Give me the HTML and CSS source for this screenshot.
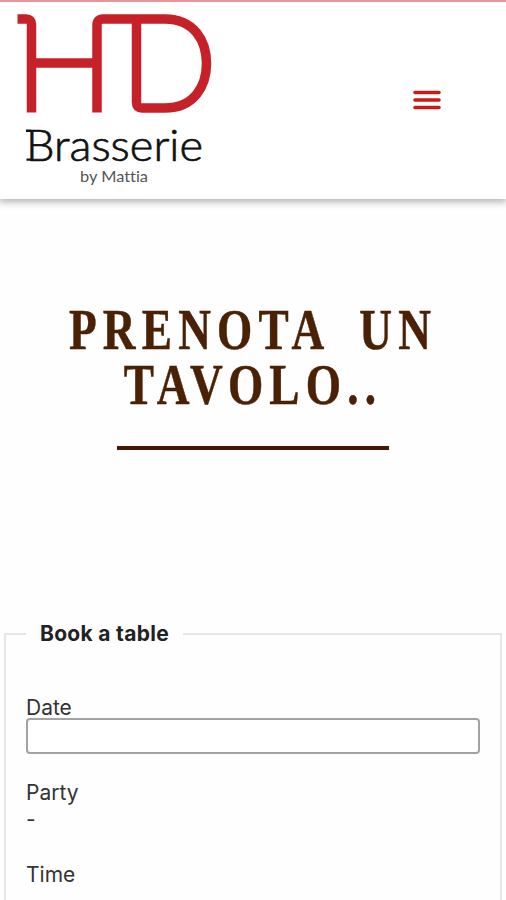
FILE: index.html
```
<!DOCTYPE html>
<html lang="it">
  <head>
    <meta charset="UTF-8" />
    <meta name="viewport" content="width=device-width, initial-scale=1.0" />
    <title>HD Brasserie - Prenota un tavolo</title>
    <link rel="stylesheet" href="styles.css">
  </head>

  <body>
    <header class="site-header">
      <a class="logo" href="#" aria-label="HD Brasserie by Mattia">
        <svg width="200" height="180" viewBox="0 0 200 180">
          <g class="logo-mark">
            <path d="M4.500 17H13Q18.500 17 18.500 22.500V110.500" />
            <path d="M18.500 61H84" />
            <path d="M84 110.500V23Q84 17 90 17H152C181 17 193.500 39 193.500 61.500S181 106 152 106H129Q123.500 106 123.500 100.500V17" />
          </g>
          <text class="logo-name" x="13" y="158.500" textLength="177" lengthAdjust="spacingAndGlyphs">Brasserie</text>
          <path class="logo-serif" d="M13 128.800H18M13.500 157.600H18" />
          <text class="logo-by" x="67" y="180" textLength="68" lengthAdjust="spacingAndGlyphs">by Mattia</text>
        </svg>
      </a>
      <button class="menu-toggle" aria-label="Menu">
        <svg width="28" height="20" viewBox="0 0 28 20">
          <path d="M2 2.500H26M2 10H26M2 17.500H26" />
        </svg>
      </button>
    </header>

    <main>
      <section class="intro">
        <h1>PRENOTA UN<br>TAVOLO..</h1>
        <hr>
      </section>

      <form class="booking">
        <fieldset>
          <legend>Book a table</legend>
          <div class="field">
            <label for="date">Date</label>
            <input id="date" type="text">
          </div>
          <div class="field">
            <span>Party</span>
            <span>-</span>
          </div>
          <div class="field">
            <span>Time</span>
          </div>
        </fieldset>
      </form>
    </main>
  </body>
</html>
```
FILE: styles.css
```
* {
  box-sizing: border-box;
}

body {
  margin: 0;
  height: 900px;
  overflow: hidden;
  background: #fefefe;
  color: #333;
  font-family: Inter, "Liberation Sans", sans-serif;
}

.site-header {
  display: flex;
  justify-content: space-between;
  height: 199px;
  padding: 0 65px 0 13px;
  border-top: 2px solid #e9959b;
  background: #fff;
  box-shadow: 0 2px 7px 1px rgba(0, 0, 0, 0.3);
}

.logo svg {
  display: block;
  overflow: visible;
}

.logo-mark {
  fill: none;
  stroke: #c62129;
  stroke-width: 9.5;
}

.logo-name {
  font: 300 43px Lato, sans-serif;
  fill: #111;
  stroke: #111;
  stroke-width: 0.7;
}

.logo-serif {
  stroke: #111;
  stroke-width: 2.4;
}

.logo-by {
  font: 400 16px Lato, sans-serif;
  font-variant-ligatures: none;
  fill: #555;
}

.menu-toggle {
  align-self: center;
  padding: 0 0 2px;
  border: 0;
  background: none;
}

.menu-toggle svg {
  display: block;
}

.menu-toggle path {
  stroke: #c91c18;
  stroke-width: 3.6;
  stroke-linecap: round;
}

.intro {
  padding-top: 104px;
  text-align: center;
}

h1 {
  margin: 0 -60px;
  color: #4b2106;
  font: bold 56px/55px "Liberation Serif", serif;
  letter-spacing: 7.6px;
  word-spacing: 17px;
  transform: scaleX(0.81);
  -webkit-text-stroke: 0.5px #4b2106;
}

hr {
  width: 272px;
  height: 4px;
  margin: 33px auto 0;
  border: 0;
  background: #451507;
}

.booking {
  margin: 171px 4px 0;
}

fieldset {
  height: 320px;
  margin: 0;
  padding: 51px 20px 0;
  border: 2px solid #e6e6e6;
  font-size: 21px;
  line-height: 27px;
}

legend {
  padding: 0 14px;
  color: #222;
  font-weight: 700;
  line-height: 26px;
  letter-spacing: 0.3px;
}

.field {
  display: flex;
  flex-direction: column;
  margin-bottom: 28px;
}

.field label {
  line-height: 20px;
}

.field:first-of-type {
  margin-bottom: 25px;
}

input {
  width: 100%;
  height: 36px;
  border: 2px solid #a3a3a3;
  border-radius: 4px;
  background: #fff;
}
```
